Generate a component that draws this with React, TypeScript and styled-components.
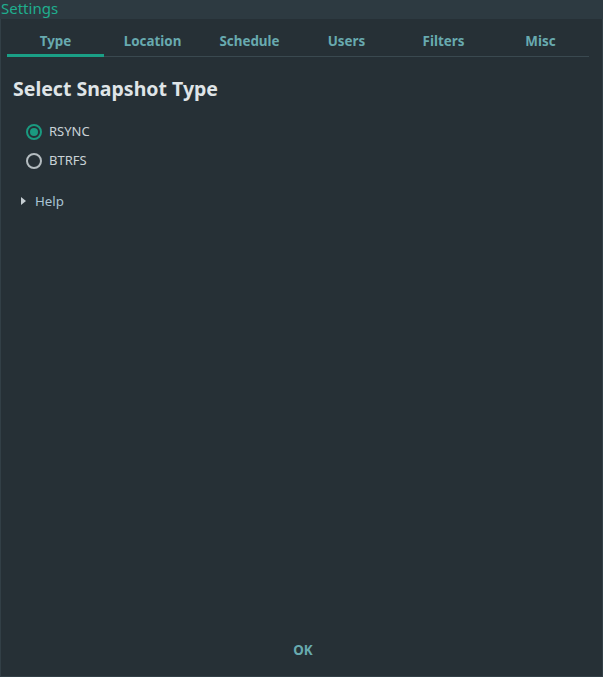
import React, { useState } from "react";
import styled, { createGlobalStyle } from "styled-components";

const Global = createGlobalStyle`
  html, body { margin: 0; padding: 0; background: #263036; }
  body { font-family: "Noto Sans", "Open Sans", sans-serif; }
  * { box-sizing: border-box; }
`;

const Window = styled.div`
  width: 603px;
  height: 677px;
  display: flex;
  flex-direction: column;
  background: #263036;
`;

const TitleBar = styled.div`
  height: 19px;
  flex: none;
  background: #2d3a41;
  color: #1fae8e;
  font-size: 15px;
  line-height: 16px;
  padding-left: 1px;
`;

const Body = styled.div`
  flex: 1;
  display: flex;
  flex-direction: column;
  border-left: 1px solid #323f46;
  border-right: 1px solid #323f46;
  border-bottom: 1px solid #323f46;
  padding: 0 13px 0 6px;
`;

const TabBar = styled.div`
  display: grid;
  grid-template-columns: repeat(6, 1fr);
  margin-top: 10px;
  border-bottom: 1px solid #3a4950;
`;

const Tab = styled.button<{ $active?: boolean }>`
  background: none;
  border: none;
  padding: 3px 0 4px;
  font-family: inherit;
  font-size: 13.4px;
  font-weight: 700;
  line-height: 18px;
  color: #68aaaf;
  cursor: pointer;
  border-bottom: 3px solid ${(p) => (p.$active ? "#1a9f86" : "transparent")};
  margin-bottom: -1px;
`;

const Panel = styled.div`
  flex: 1;
  display: flex;
  flex-direction: column;
  padding-left: 6px;
`;

const Heading = styled.h2`
  margin: 19px 0 0;
  font-size: 19.5px;
  font-weight: 700;
  line-height: 26px;
  color: #dfe4e7;
`;

const RadioList = styled.div`
  display: flex;
  flex-direction: column;
  gap: 12px;
  margin: 21px 0 0 13px;
`;

const RadioRow = styled.label`
  display: flex;
  align-items: center;
  gap: 7px;
  font-size: 13px;
  line-height: 17px;
  color: #c9d2d7;
  cursor: pointer;
`;

const RadioCircle = styled.span<{ $checked?: boolean }>`
  width: 16px;
  height: 16px;
  border-radius: 50%;
  border: 2px solid ${(p) => (p.$checked ? "#1a9a80" : "#b4bcc0")};
  display: flex;
  align-items: center;
  justify-content: center;
  &::after {
    content: "";
    width: 8px;
    height: 8px;
    border-radius: 50%;
    background: ${(p) => (p.$checked ? "#1a9a80" : "transparent")};
  }
`;

const HelpRow = styled.div`
  display: flex;
  align-items: center;
  gap: 9px;
  margin: 23px 0 0 8px;
  font-size: 13.3px;
  line-height: 18px;
  color: #a9c4d4;
`;

const Triangle = styled.span`
  width: 0;
  height: 0;
  border-top: 4px solid transparent;
  border-bottom: 4px solid transparent;
  border-left: 5px solid #c5cdd2;
`;

const Footer = styled.div`
  display: flex;
  justify-content: center;
  padding: 0 0 13px 10px;
  margin-top: auto;
`;

const OkButton = styled.button`
  background: none;
  border: none;
  font-family: inherit;
  font-size: 13.4px;
  font-weight: 700;
  color: #68aaaf;
  padding: 4px 8px;
  cursor: pointer;
`;

const tabs = ["Type", "Location", "Schedule", "Users", "Filters", "Misc"];

export default function App() {
  const [active, setActive] = useState("Type");
  const [type, setType] = useState("RSYNC");
  return (
    <Window>
      <Global />
      <TitleBar>Settings</TitleBar>
      <Body>
        <TabBar>
          {tabs.map((t) => (
            <Tab key={t} $active={t === active} onClick={() => setActive(t)}>
              {t}
            </Tab>
          ))}
        </TabBar>
        <Panel>
          <Heading>Select Snapshot Type</Heading>
          <RadioList>
            {["RSYNC", "BTRFS"].map((o) => (
              <RadioRow key={o} onClick={() => setType(o)}>
                <RadioCircle $checked={type === o} />
                {o}
              </RadioRow>
            ))}
          </RadioList>
          <HelpRow>
            <Triangle />
            Help
          </HelpRow>
        </Panel>
        <Footer>
          <OkButton>OK</OkButton>
        </Footer>
      </Body>
    </Window>
  );
}
